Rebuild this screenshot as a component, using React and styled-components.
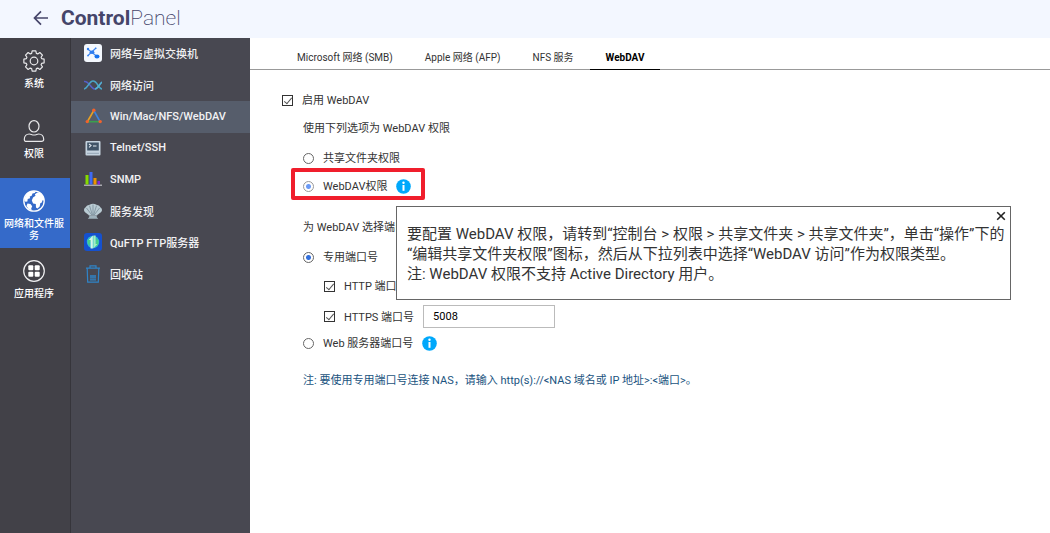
import React, { useState } from "react";
import styled, { createGlobalStyle } from "styled-components";

const railItems = [
  { id: "system", label: "系统", icon: <GearIcon /> },
  { id: "privilege", label: "权限", icon: <UserIcon /> },
  { id: "network", label: "网络和文件服务", icon: <GlobeIcon /> },
  { id: "apps", label: "应用程序", icon: <AppsIcon /> },
];

const menuItems = [
  { id: "switch", label: "网络与虚拟交换机", icon: <SwitchIcon /> },
  { id: "access", label: "网络访问", icon: <AccessIcon /> },
  { id: "webdav", label: "Win/Mac/NFS/WebDAV", icon: <TriangleIcon /> },
  { id: "telnet", label: "Telnet/SSH", icon: <TerminalIcon /> },
  { id: "snmp", label: "SNMP", icon: <BarsIcon /> },
  { id: "discovery", label: "服务发现", icon: <ShellIcon /> },
  { id: "quftp", label: "QuFTP FTP服务器", icon: <FtpIcon /> },
  { id: "recycle", label: "回收站", icon: <BinIcon /> },
];

const tabs = ["Microsoft 网络 (SMB)", "Apple 网络 (AFP)", "NFS 服务", "WebDAV"];

function App() {
  const [permission, setPermission] = useState("webdav");
  const [port, setPort] = useState("dedicated");
  const [tipOpen, setTipOpen] = useState(true);

  return (
    <Page>
      <GlobalStyle />
      <Header>
        <BackButton type="button" aria-label="返回">
          <svg width="16" height="16" viewBox="0 0 16 16" fill="none" stroke="currentColor" strokeWidth="1.7">
            <path d="M15 8H1.6M8 1.4 1.5 8 8 14.6" />
          </svg>
        </BackButton>
        <Title>
          <b>Control</b>Panel
        </Title>
      </Header>
      <Body>
        <Rail>
          {railItems.map((item) => (
            <RailLink key={item.id} href={`#${item.id}`} $active={item.id === "network"}>
              {item.icon}
              <span>{item.label}</span>
            </RailLink>
          ))}
        </Rail>
        <Menu>
          <MenuList>
            {menuItems.map((item) => (
              <MenuLink key={item.id} href={`#${item.id}`} $active={item.id === "webdav"}>
                {item.icon}
                <span>{item.label}</span>
              </MenuLink>
            ))}
          </MenuList>
        </Menu>
        <Main>
          <Tabs role="tablist">
            {tabs.map((tab) => (
              <Tab key={tab} type="button" role="tab" aria-selected={tab === "WebDAV"}>
                {tab}
              </Tab>
            ))}
          </Tabs>
          <Form>
            <Row>
              <Checkbox id="enable" defaultChecked />
              <Label htmlFor="enable">启用 WebDAV</Label>
            </Row>
            <Group>
              <Caption>使用下列选项为 WebDAV 权限</Caption>
              <Options>
                <Row>
                  <Radio
                    id="perm-share"
                    name="permission"
                    checked={permission === "share"}
                    onChange={() => setPermission("share")}
                  />
                  <Label htmlFor="perm-share">共享文件夹权限</Label>
                </Row>
                <HighlightRow>
                  <Radio
                    id="perm-webdav"
                    name="permission"
                    $soft
                    checked={permission === "webdav"}
                    onChange={() => setPermission("webdav")}
                  />
                  <Label htmlFor="perm-webdav">WebDAV权限</Label>
                  <InfoButton type="button" aria-label="信息" onClick={() => setTipOpen(true)}>
                    <InfoIcon />
                  </InfoButton>
                </HighlightRow>
              </Options>
            </Group>
            <Group $apart>
              <Caption>为 WebDAV 选择端口号</Caption>
              <Options $loose>
                <Row>
                  <Radio
                    id="port-dedicated"
                    name="port"
                    checked={port === "dedicated"}
                    onChange={() => setPort("dedicated")}
                  />
                  <Label htmlFor="port-dedicated">专用端口号</Label>
                </Row>
                <Ports>
                  <Row>
                    <Checkbox id="http" defaultChecked />
                    <Label htmlFor="http">HTTP 端口号</Label>
                  </Row>
                  <Row>
                    <Checkbox id="https" defaultChecked />
                    <Label htmlFor="https">HTTPS 端口号</Label>
                    <PortInput type="text" aria-label="HTTPS 端口号" defaultValue="5008" />
                  </Row>
                </Ports>
              </Options>
              <Row>
                <Radio
                  id="port-web"
                  name="port"
                  checked={port === "web"}
                  onChange={() => setPort("web")}
                />
                <Label htmlFor="port-web">Web 服务器端口号</Label>
                <InfoButton type="button" aria-label="信息">
                  <InfoIcon />
                </InfoButton>
              </Row>
            </Group>
            <Note>注: 要使用专用端口号连接 NAS，请输入 http(s)://&lt;NAS 域名或 IP 地址&gt;:&lt;端口&gt;。</Note>
          </Form>
          {tipOpen && (
            <Tooltip role="tooltip">
              要配置 WebDAV 权限，请转到“控制台 &gt; 权限 &gt; 共享文件夹 &gt; 共享文件夹”，单击“操作”下的
              <br />
              “编辑共享文件夹权限”图标，然后从下拉列表中选择“WebDAV 访问”作为权限类型。
              <br />
              注: WebDAV 权限不支持 Active Directory 用户。
              <CloseButton type="button" aria-label="关闭" onClick={() => setTipOpen(false)}>
                <svg width="10" height="10" viewBox="0 0 10 10" fill="none" stroke="#222" strokeWidth="1.6">
                  <path d="M1.2 1.2 8.8 8.8M8.8 1.2 1.2 8.8" />
                </svg>
              </CloseButton>
            </Tooltip>
          )}
        </Main>
      </Body>
    </Page>
  );
}

export default App;

function GearIcon() {
  const teeth = [];
  for (let i = 0; i < 8; i++) {
    const a = (i * Math.PI) / 4 - Math.PI / 2;
    [
      [8, -0.3],
      [10.3, -0.18],
      [10.3, 0.18],
      [8, 0.3],
    ].forEach(([r, d]) => {
      teeth.push(`${(11 + r * Math.cos(a + d)).toFixed(2)},${(11 + r * Math.sin(a + d)).toFixed(2)}`);
    });
  }
  return (
    <svg width="22" height="22" viewBox="0 0 22 22" fill="none" stroke="#e8e8ea" strokeWidth="1.2" strokeLinejoin="round">
      <polygon points={teeth.join(" ")} />
      <circle cx="11" cy="11" r="3.8" />
    </svg>
  );
}

function UserIcon() {
  return (
    <svg width="22" height="22" viewBox="0 0 22 22" fill="none" stroke="#e8e8ea" strokeWidth="1.2">
      <ellipse cx="11" cy="6.3" rx="5" ry="5.7" />
      <path d="M3.6 21.4c-1.6 0-2.3-.6-2.3-1.8 0-3.4 2.2-5.6 5-5.6 1.6 0 2.6 1 4.7 1s3.1-1 4.7-1c2.8 0 5 2.2 5 5.6 0 1.2-.7 1.800-2.300 1.800z" />
    </svg>
  );
}

function GlobeIcon() {
  return (
    <svg width="22" height="22" viewBox="0 0 22 22">
      <circle cx="11" cy="11" r="10.2" fill="none" stroke="#fff" strokeWidth="1.3" />
      <path
        fill="#fff"
        d="M2 7 4.500 3 8.500 1l4.500.3-1.200 1.800-2.300.5-.8 2.200-1.900.8.200 1.700-2.300.6-.3 2.600-1.800.3L1.300 11z"
      />
      <path
        fill="#fff"
        d="m10 7.500 2.500-1.700-.6-1.500 2.500-1.800 3.300.8 2.600 3.500.8 3.700-1.600-.3-.7 2.300-1.500.7-.6 3.200-2.200 2-1.500-1-.2-3.300-2.700-.7-1.300-2.900z"
      />
      <path fill="#fff" d="m4.500 13.500 3 .6 1.700 2.200-1 2.200.6 2-3.300-1.500-2-3z" />
    </svg>
  );
}

function AppsIcon() {
  return (
    <svg width="22" height="22" viewBox="0 0 22 22">
      <circle cx="11" cy="11" r="10.3" fill="none" stroke="#f0f0f2" strokeWidth="1.2" />
      <g fill="#fff">
        <rect x="5.3" y="5.3" width="5" height="5" rx="1" />
        <rect x="11.7" y="5.3" width="5" height="5" rx="1" />
        <rect x="5.3" y="11.7" width="5" height="5" rx="1" />
        <rect x="11.7" y="11.7" width="5" height="5" rx="1" />
      </g>
    </svg>
  );
}

function SwitchIcon() {
  return (
    <svg width="18" height="18" viewBox="0 0 18 18">
      <rect width="18" height="18" rx="3" fill="#f4f8fe" />
      <g stroke="#3d86f0" strokeWidth="1.1" fill="none">
        <path d="M4 5.2 13 12.5M12 4 4 11.500" />
      </g>
      <ellipse cx="8" cy="8.3" rx="2.4" ry="1.7" fill="#2f7df0" />
      <circle cx="4" cy="5" r="1.2" fill="#2f7df0" />
      <circle cx="11.8" cy="4.2" r="0.8" fill="#2f7df0" />
      <circle cx="4" cy="11.6" r="0.9" fill="#2f7df0" />
      <ellipse cx="13" cy="12.6" rx="2.5" ry="2" fill="#1672ee" />
    </svg>
  );
}

function AccessIcon() {
  return (
    <svg width="18" height="18" viewBox="0 0 18 18" fill="none" strokeWidth="1.6">
      <path d="M0 5.500C5 4.500 7 13 11 13c3 0 4-4.500 7-7" stroke="#5560c8" />
      <path d="M0 13c4-.5 5-8 9-8 4.500 0 5 7.500 9 8" stroke="#4aa5c8" />
      <path d="M11 13c3 0 4-4.500 7-7" stroke="#52b4cc" />
    </svg>
  );
}

function TriangleIcon() {
  return (
    <svg width="18" height="18" viewBox="0 0 18 18" fill="none" strokeWidth="1.6">
      <path d="M9.8 3.5 3.5 14.5" stroke="#e8a024" />
      <path d="M9.8 3.5 16 14.5" stroke="#3b82e0" />
      <path d="M3.5 14.7H16" stroke="#3aa04e" />
      <g fill="#f2622c">
        <circle cx="9.8" cy="3.3" r="1.7" />
        <circle cx="3.3" cy="14.6" r="1.7" />
        <circle cx="16.2" cy="14.6" r="1.7" />
      </g>
    </svg>
  );
}

function TerminalIcon() {
  return (
    <svg width="18" height="18" viewBox="0 0 18 18" fill="none">
      <rect x="1.5" y="2" width="15" height="14.5" rx="1" fill="#c5d3df" />
      <rect x="3.2" y="3.5" width="11.6" height="8" fill="#405468" />
      <path d="m5 5 2 1.6-2 1.7M9 7h3.500" stroke="#e5edf4" strokeWidth="1.1" />
      <path d="M3 14.3h12" stroke="#94a6b5" strokeWidth="1" />
    </svg>
  );
}

function BarsIcon() {
  return (
    <svg width="18" height="18" viewBox="0 0 18 18">
      <rect y="14.5" width="18" height="1.5" fill="#a9a9b0" />
      <rect x="1.5" y="5" width="3" height="9.5" fill="#85dc00" />
      <rect x="5.5" y="2" width="3" height="12.5" fill="#3f6af5" />
      <rect x="9.5" y="8" width="3" height="6.5" fill="#ee9300" />
      <rect x="13.5" y="11" width="2.5" height="3.5" fill="#8428d8" />
    </svg>
  );
}

function ShellIcon() {
  return (
    <svg width="18" height="18" viewBox="0 0 18 18" fill="none">
      <path d="M0 8c0-2 1.500-2.300 2-3.300C3 2.800 4.800 3.200 6 2.400c1.500-.8 4.500-.8 6 0 1.200.8 3 .4 4 2.300.5 1 2 1.300 2 3.300 0 2.200-2.500 3-5.500 5.500h-7C2.500 11 0 10.200 0 8z" fill="#b9cbd3" />
      <path d="M7.8 13 2.5 6M8.4 13 5.5 3.7M9 13V2.600M9.600 13l2.900-9.300M10.200 13l5.300-7" stroke="#788d99" strokeWidth="0.8" />
      <path d="M4.500 13.500h9l-1 1.300 1.700 1.900H3.800l1.700-1.900z" fill="#9fb2bc" />
    </svg>
  );
}

function FtpIcon() {
  return (
    <svg width="18" height="18" viewBox="0 0 18 18">
      <rect width="18" height="18" rx="3" fill="#1551cf" />
      <circle cx="9" cy="9" r="6.2" fill="#2fb8d6" />
      <path d="M3.500 7.500 6 5l1 3-1.500 2 .5 3-2-2zM12 5l2.500 2.500v3.500L12 14z" fill="#48cf8a" />
      <path d="M8.800 15.500H6.600V7H4.800l4-4.500z" fill="#d5f7e6" />
      <path d="M9.400 2.500h2.200V11h1.800l-4 4.500z" fill="#a4efbd" />
    </svg>
  );
}

function BinIcon() {
  return (
    <svg width="18" height="18" viewBox="0 0 18 18" fill="none" stroke="#2f84c8" strokeWidth="1.2">
      <path d="M2 3.2h14M6 3V.8h6V3M3.200 3.500l.5 13.700h10.600l.5-13.700" />
      <path d="M6 11h6M6 12.900h6M6 14.800h6" strokeWidth="1.3" />
    </svg>
  );
}

function InfoIcon() {
  return (
    <svg width="15" height="15" viewBox="0 0 15 15">
      <circle cx="7.5" cy="7.5" r="7.3" fill="#00a8fb" />
      <circle cx="7.5" cy="3.8" r="1.2" fill="#fff" />
      <rect x="6.5" y="6" width="2" height="5.8" fill="#fff" />
    </svg>
  );
}

const GlobalStyle = createGlobalStyle`
  * {
    box-sizing: border-box;
  }
  body {
    margin: 0;
    background: #fff;
    color: #333;
    font-family: Roboto, "Noto Sans CJK SC", sans-serif;
    font-size: 11px;
  }
  a {
    text-decoration: none;
  }
  button,
  input {
    font-family: inherit;
    margin: 0;
  }
  svg {
    display: block;
    flex: none;
  }
`;

const Page = styled.div`
  display: flex;
  flex-direction: column;
  min-height: 100vh;
`;

const Header = styled.header`
  display: flex;
  align-items: center;
  gap: 12px;
  height: 38px;
  padding: 0 33px 2px;
  background: #f3f7ff;
  color: #45456a;
`;

const BackButton = styled.button`
  padding: 0;
  border: 0;
  background: none;
  color: inherit;
  cursor: pointer;
`;

const Title = styled.h1`
  margin: 0;
  font-size: 21px;
  line-height: 28px;
  font-weight: 200;
  b {
    font-weight: 700;
  }
`;

const Body = styled.div`
  display: flex;
  flex: 1;
`;

const Rail = styled.nav`
  flex: none;
  width: 71px;
  background: #424148;
  border-right: 1px solid #36353b;
`;

const RailLink = styled.a`
  display: flex;
  flex-direction: column;
  align-items: center;
  gap: 6px;
  min-height: 70px;
  padding: 12px 4px 6px 2px;
  color: #fff;
  font-size: 10px;
  font-weight: 500;
  line-height: 12px;
  text-align: center;
  background: ${(props) => (props.$active ? "#356ac9" : "transparent")};
`;

const Menu = styled.nav`
  flex: none;
  width: 179px;
  background: #484851;
`;

const MenuList = styled.div`
  display: flex;
  flex-direction: column;
  height: 252px;
`;

const MenuLink = styled.a`
  display: flex;
  flex: 1;
  align-items: center;
  gap: 8px;
  padding: 0 13px 1px;
  color: #f2f2f4;
  font-weight: 500;
  background: ${(props) => (props.$active ? "#565d6b" : "transparent")};
`;

const Main = styled.main`
  position: relative;
  flex: 1;
  min-width: 0;
`;

const Tabs = styled.div`
  display: flex;
  height: 32px;
  padding: 0 31px;
  border-bottom: 1px solid #999;
`;

const Tab = styled.button`
  height: 32px;
  padding: 8px 16px 0;
  border: 0;
  border-bottom: 1px solid transparent;
  background: none;
  color: #333;
  font-size: 10px;
  line-height: 16px;
  cursor: pointer;
  &[aria-selected="true"] {
    color: #000;
    font-weight: 700;
    border-bottom-color: #000;
  }
`;

const Form = styled.form`
  display: flex;
  flex-direction: column;
  gap: 8px;
  padding: 20px 32px;
`;

const Row = styled.div`
  display: flex;
  align-items: center;
  gap: 9px;
  min-height: 20px;
`;

const Label = styled.label`
  padding-top: 2px;
  line-height: 18px;
`;

const Caption = styled.p`
  margin: 0;
  padding: 2px 0 5px;
  line-height: 18px;
`;

const HighlightRow = styled(Row)`
  position: relative;
  align-self: flex-start;
  &::after {
    content: "";
    position: absolute;
    inset: -8px -14px -4px -12px;
    border: 4px solid #f01e2c;
    border-radius: 2px;
    pointer-events: none;
  }
`;

const Group = styled.div`
  display: flex;
  flex-direction: column;
  gap: 5px;
  padding-left: 21px;
  margin-top: ${(props) => (props.$apart ? "13px" : "0")};
`;

const Options = styled.div`
  display: flex;
  flex-direction: column;
  gap: ${(props) => (props.$loose ? "9px" : "8px")};
`;

const Ports = styled.div`
  display: flex;
  flex-direction: column;
  gap: 9px;
  padding-left: 21px;
`;

const Checkbox = styled.input.attrs({ type: "checkbox" })`
  appearance: none;
  position: relative;
  flex: none;
  width: 11px;
  height: 11px;
  border: 1px solid #333;
  background: #fff;
  &:checked::after {
    content: "";
    position: absolute;
    left: 3px;
    top: 0;
    width: 3px;
    height: 7px;
    border: solid #555;
    border-width: 0 1px 1px 0;
    transform: rotate(40deg);
  }
`;

const Radio = styled.input.attrs({ type: "radio" })`
  appearance: none;
  flex: none;
  width: 11px;
  height: 11px;
  border: 1px solid ${(props) => (props.$soft ? "#999" : "#666")};
  border-radius: 50%;
  background: #fff;
  &:checked {
    background: radial-gradient(
      circle,
      ${(props) => (props.$soft ? "#6b9af5" : "#3370dc")} 0 2px,
      #fff 3px
    );
  }
`;

const InfoButton = styled.button`
  padding: 0;
  border: 0;
  background: none;
  cursor: pointer;
`;

const PortInput = styled.input`
  width: 132px;
  height: 23px;
  padding: 0 9px;
  border: 1px solid #bbb;
  color: #000;
  font-size: 11px;
`;

const Note = styled.p`
  margin: 10px 0 0 21px;
  color: #1a5380;
  line-height: 20px;
`;

const Tooltip = styled.div`
  position: absolute;
  top: 168px;
  left: 146px;
  right: 39px;
  min-height: 94px;
  padding: 17px 0 15px 10px;
  border: 1px solid #666;
  background: #fff;
  font-size: 15px;
  line-height: 20px;
  white-space: nowrap;
`;

const CloseButton = styled.button`
  position: absolute;
  top: 4px;
  right: 4px;
  padding: 0;
  border: 0;
  background: none;
  cursor: pointer;
`;
